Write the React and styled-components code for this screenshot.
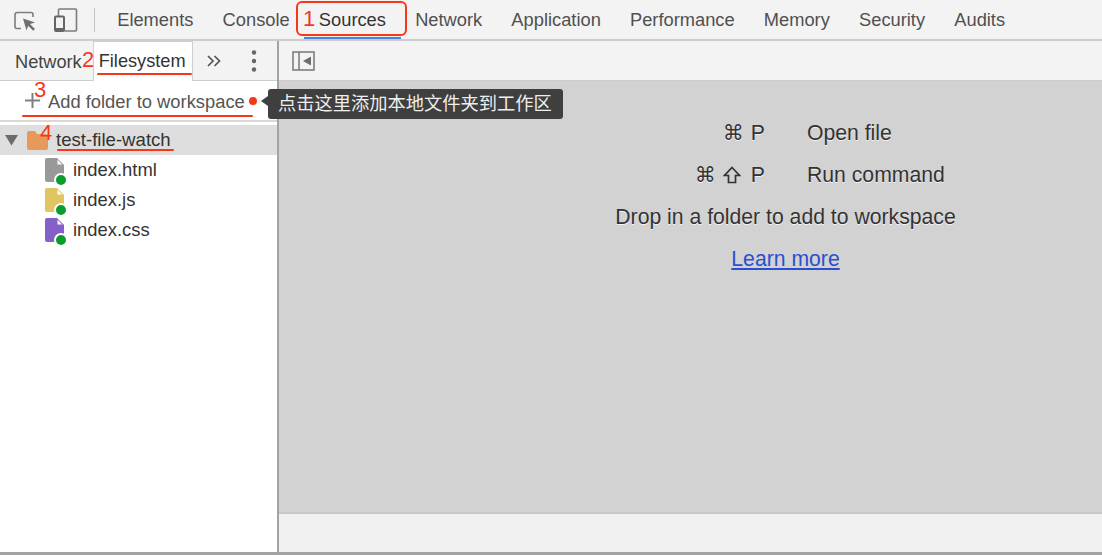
import React from "react";
import styled, { createGlobalStyle } from "styled-components";

const GlobalStyle = createGlobalStyle`
  html, body { margin: 0; padding: 0; background: #fff; overflow: hidden; }
  body { font-family: "Liberation Sans", Arial, "Noto Sans CJK SC", sans-serif; color: #333; }
`;

const Page = styled.div`
  position: relative;
  width: 1102px;
  height: 555px;
  display: flex;
  flex-direction: column;
  box-sizing: border-box;
  border-bottom: 3px solid #a3a3a3;
  overflow: hidden;
`;

const Toolbar = styled.div`
  height: 39px;
  flex: none;
  display: flex;
  align-items: center;
  background: #f3f3f3;
  border-bottom: 2px solid #cdcdcd;
`;

const ToolIcons = styled.div`
  width: 95px;
  height: 24px;
  flex: none;
  display: flex;
  align-items: center;
  gap: 18px;
  padding-left: 14px;
  box-sizing: border-box;
  border-right: 1px solid #c4c4c4;
`;

const MainTab = styled.div`
  height: 39px;
  flex: none;
  box-sizing: border-box;
  padding: 0 14.6px;
  font-size: 18.3px;
  line-height: 40px;
  color: #505050;
  border-bottom: ${(p) => (p.$active ? "2px solid #4a80e8" : "none")};
  ${(p) => p.$active && "color: #333;"}
`;

const TabList = styled.div`
  display: flex;
  margin-left: 7.6px;
`;

const Body = styled.div`
  flex: 1;
  min-height: 0;
  display: flex;
`;

const Sidebar = styled.div`
  width: 279px;
  flex: none;
  box-sizing: border-box;
  background: #fff;
  border-right: 2px solid #a3a3a3;
  display: flex;
  flex-direction: column;
`;

const SideTabs = styled.div`
  height: 40px;
  flex: none;
  box-sizing: border-box;
  display: flex;
  align-items: center;
  background: #f3f3f3;
  border-bottom: 1px solid #cdcdcd;
  padding-left: 15px;
  font-size: 18.2px;
`;

const SideTab = styled.div`
  color: #444;
  margin: 3px 11px 0 0;
`;

const ActiveSideTab = styled.div`
  width: 100px;
  height: 40px;
  box-sizing: border-box;
  margin-top: 1px;
  padding: 9px 0 0 5px;
  background: #fff;
  border: 1px solid #cfcfcf;
  border-bottom: none;
  color: #333;
`;

const SideIcons = styled.div`
  display: flex;
  align-items: center;
  margin-left: 14px;
  gap: 30px;
`;

const AddRow = styled.div`
  height: 41px;
  flex: none;
  box-sizing: border-box;
  display: flex;
  align-items: center;
  padding: 2px 0 0 48px;
  font-size: 18.35px;
  color: #555;
  border-bottom: 2px solid #d8d8d8;
  margin-bottom: 3px;
`;

const FolderRow = styled.div`
  height: 30px;
  flex: none;
  display: flex;
  align-items: center;
  background: #dedede;
  font-size: 18.6px;
  color: #333;
  padding-left: 5px;
  gap: 8px;
`;

const FileRow = styled.div`
  height: 30px;
  flex: none;
  display: flex;
  align-items: center;
  padding-left: 45px;
  font-size: 18.4px;
  color: #333;
  gap: 9px;
`;

const FileIcon = styled.div`
  position: relative;
  width: 19px;
  height: 24px;
  flex: none;
`;

const StatusDot = styled.span`
  position: absolute;
  right: -4px;
  bottom: -5px;
  width: 10px;
  height: 10px;
  border-radius: 50%;
  background: #0a9c2c;
  border: 2px solid #fff;
`;

const Content = styled.div`
  flex: 1;
  min-width: 0;
  display: flex;
  flex-direction: column;
`;

const EditorBar = styled.div`
  height: 40px;
  flex: none;
  box-sizing: border-box;
  display: flex;
  align-items: center;
  padding: 1px 0 0 13px;
  background: #f3f3f3;
  border-bottom: 1px solid #cdcdcd;
`;

const Placeholder = styled.div`
  flex: 1;
  background: #d2d2d2;
  display: flex;
  flex-direction: column;
  align-items: center;
  padding: 40px 0 0 190px;
  box-sizing: border-box;
  font-size: 21.2px;
  color: #333;
  text-shadow: 0 1px 0 rgba(255, 255, 255, 0.75);
`;

const Shortcut = styled.div`
  height: 42px;
  width: 100%;
  display: flex;
  align-items: flex-start;
  line-height: 24px;
`;

const Keys = styled.div`
  width: 296px;
  flex: none;
  display: flex;
  justify-content: flex-end;
  align-items: center;
  height: 24px;
  gap: 10px;
`;

const KeyGlyph = styled.span`
  font-family: "DejaVu Sans", sans-serif;
  font-size: 21px;
  width: 18px;
  text-align: center;
`;

const Label = styled.div`
  margin-left: 42px;
`;

const DropText = styled.div`
  height: 42px;
  line-height: 24px;
`;

const LearnMore = styled.a`
  line-height: 24px;
  color: #2a4fd0;
  text-decoration: underline;
  text-shadow: none;
`;

const StatusBar = styled.div`
  height: 40px;
  flex: none;
  background: #f1f1f1;
  border-top: 2px solid #c9c9c9;
  box-sizing: border-box;
`;

const Tooltip = styled.div`
  position: absolute;
  left: 268px;
  top: 89px;
  height: 30px;
  box-sizing: border-box;
  padding: 0 11px 0 10px;
  line-height: 27px;
  font-size: 18.25px;
  font-family: "Noto Sans CJK SC", sans-serif;
  color: #eee;
  background: #3f3f3f;
  border-radius: 3px;
  white-space: nowrap;
  &::before {
    content: "";
    position: absolute;
    left: -7px;
    top: 7px;
    border-style: solid;
    border-width: 5px 7px 5px 0;
    border-color: transparent #3f3f3f transparent transparent;
  }
`;

const Marker = styled.div`
  position: absolute;
  left: ${(p) => p.$x}px;
  top: ${(p) => p.$y}px;
  font-size: 22px;
  line-height: 24px;
  color: #f5381a;
`;

const Underline = styled.div`
  position: absolute;
  left: ${(p) => p.$x}px;
  top: ${(p) => p.$y}px;
  width: ${(p) => p.$w}px;
  height: 2px;
  background: #f5381a;
  border-radius: 1px;
`;

const SourcesBox = styled.div`
  position: absolute;
  left: 296px;
  top: 1px;
  width: 111px;
  height: 35px;
  box-sizing: border-box;
  border: 2px solid #f5381a;
  border-radius: 6px;
`;

const RedDot = styled.div`
  position: absolute;
  left: 249px;
  top: 97px;
  width: 8px;
  height: 8px;
  border-radius: 50%;
  background: #f5381a;
`;

const PlusWrap = styled.div`
  position: absolute;
  left: 25px;
  top: 93px;
  line-height: 0;
`;

const InspectIcon = () => (
  <svg width="22" height="22" viewBox="0 0 22 22">
    <path d="M7 19.500H3A2 2 0 0 1 1 17.500V5.500a2 2 0 0 1 2-2h14a2 2 0 0 1 2 2V8" fill="none" stroke="#7c7c7c" strokeWidth="1.600" />
    <path d="M9 9.500l12 4-5 1.500 5 5-1.800 1.800-5-5-1.700 4.700z" fill="#6e6e6e" />
  </svg>
);

const DeviceIcon = () => (
  <svg width="24" height="24" viewBox="0 0 24 24">
    <path d="M4.500 8V2a1 1 0 0 1 1-1h16a1 1 0 0 1 1 1v20a1 1 0 0 1-1 1H10.500" fill="none" stroke="#7c7c7c" strokeWidth="1.600" />
    <rect x="1" y="8.500" width="9" height="14.500" rx="1" fill="none" stroke="#666" strokeWidth="2" />
    <rect x="1" y="20" width="9" height="3" fill="#666" />
  </svg>
);

const ChevronsIcon = () => (
  <svg width="14" height="12" viewBox="0 0 14 12">
    <path d="M1 1l5 5-5 5M7.500 1l5 5-5 5" fill="none" stroke="#555" strokeWidth="1.700" />
  </svg>
);

const KebabIcon = () => (
  <svg width="6" height="22" viewBox="0 0 6 22">
    <circle cx="3" cy="2.500" r="2.200" fill="#666" />
    <circle cx="3" cy="11" r="2.200" fill="#666" />
    <circle cx="3" cy="19.500" r="2.200" fill="#666" />
  </svg>
);

const PanelToggleIcon = () => (
  <svg width="23" height="20" viewBox="0 0 23 20">
    <rect x="1" y="1" width="21" height="18" fill="none" stroke="#777" strokeWidth="1.500" />
    <path d="M7 1v18" stroke="#777" strokeWidth="1.500" />
    <path d="M19 5.500v9l-8-4.500z" fill="#6e6e6e" />
  </svg>
);

const PlusIcon = () => (
  <svg width="15" height="15" viewBox="0 0 15 15">
    <path d="M7.500 0v15M0 7.500h15" stroke="#808080" strokeWidth="2" />
  </svg>
);

const ArrowIcon = () => (
  <svg width="14" height="12" viewBox="0 0 14 12">
    <path d="M0 1h13L6.500 11.500z" fill="#6b6b6b" />
  </svg>
);

const FolderIcon = () => (
  <svg width="21" height="20" viewBox="0 0 21 20">
    <path d="M0 3a2 2 0 0 1 2-2h6l2 3h9a2 2 0 0 1 2 2v12a2 2 0 0 1-2 2H2a2 2 0 0 1-2-2z" fill="#e59a5b" />
  </svg>
);

const ShiftIcon = () => (
  <svg width="18" height="18" viewBox="0 0 18 18">
    <path d="M9 1.500L16.500 9.500H12.500V16.500H5.500V9.500H1.500z" fill="none" stroke="#333" strokeWidth="1.700" strokeLinejoin="miter" />
  </svg>
);

const files = [
  { name: "index.html", color: "#999999" },
  { name: "index.js", color: "#e0c560" },
  { name: "index.css", color: "#8560c8" },
];

const App = () => {
  return (
    <Page>
      <GlobalStyle />
      <Toolbar>
        <ToolIcons>
          <InspectIcon />
          <DeviceIcon />
        </ToolIcons>
        <TabList>
          <MainTab>Elements</MainTab>
          <MainTab>Console</MainTab>
          <MainTab $active>Sources</MainTab>
          <MainTab>Network</MainTab>
          <MainTab>Application</MainTab>
          <MainTab>Performance</MainTab>
          <MainTab>Memory</MainTab>
          <MainTab>Security</MainTab>
          <MainTab>Audits</MainTab>
        </TabList>
      </Toolbar>
      <Body>
        <Sidebar>
          <SideTabs>
            <SideTab>Network</SideTab>
            <ActiveSideTab>Filesystem</ActiveSideTab>
            <SideIcons>
              <ChevronsIcon />
              <KebabIcon />
            </SideIcons>
          </SideTabs>
          <AddRow>Add folder to workspace</AddRow>
          <FolderRow>
            <ArrowIcon />
            <FolderIcon />
            <span>test-file-watch</span>
          </FolderRow>
          {files.map((file) => (
            <FileRow key={file.name}>
              <FileIcon>
                <svg width="19" height="24" viewBox="0 0 19 24">
                  <path d="M0 2a2 2 0 0 1 2-2h10l7 7v15a2 2 0 0 1-2 2H2a2 2 0 0 1-2-2z" fill={file.color} />
                  <path d="M12.500 1.800L17.200 6.500H12.500z" fill="#fff" />
                </svg>
                <StatusDot />
              </FileIcon>
              <span>{file.name}</span>
            </FileRow>
          ))}
        </Sidebar>
        <Content>
          <EditorBar>
            <PanelToggleIcon />
          </EditorBar>
          <Placeholder>
            <Shortcut>
              <Keys>
                <KeyGlyph>⌘</KeyGlyph>
                <span>P</span>
              </Keys>
              <Label>Open file</Label>
            </Shortcut>
            <Shortcut>
              <Keys>
                <KeyGlyph>⌘</KeyGlyph>
                <ShiftIcon />
                <span>P</span>
              </Keys>
              <Label>Run command</Label>
            </Shortcut>
            <DropText>Drop in a folder to add to workspace</DropText>
            <LearnMore href="#">Learn more</LearnMore>
          </Placeholder>
          <StatusBar />
        </Content>
      </Body>

      <SourcesBox />
      <Marker $x={303} $y={7}>1</Marker>
      <Marker $x={82} $y={48}>2</Marker>
      <Marker $x={34} $y={78}>3</Marker>
      <Marker $x={40} $y={121}>4</Marker>
      <Underline $x={97} $y={73} $w={95} />
      <Underline $x={22} $y={115} $w={231} />
      <Underline $x={57} $y={149} $w={117} />
      <PlusWrap><PlusIcon /></PlusWrap>
      <RedDot />
      <Tooltip>点击这里添加本地文件夹到工作区</Tooltip>
    </Page>
  );
};

export default App;
